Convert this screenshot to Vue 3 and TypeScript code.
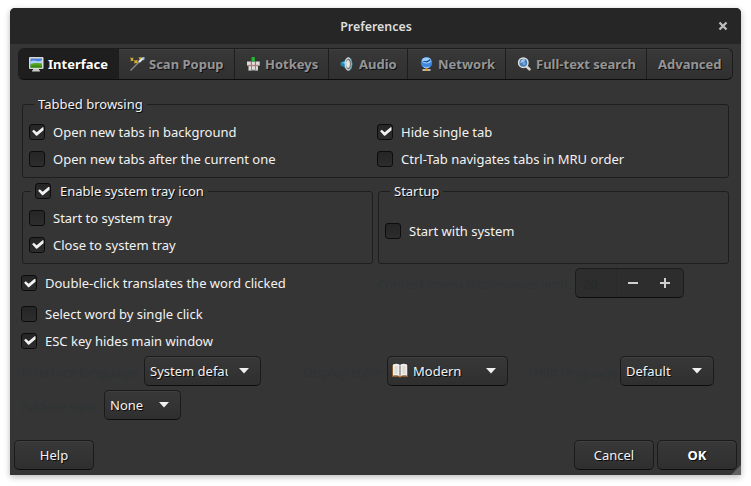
<script setup lang="ts">
import { reactive, ref } from 'vue'

interface Tab {
  id: string
  label: string
  width: number
}

const tabs: Tab[] = [
  { id: 'interface', label: 'Interface', width: 100 },
  { id: 'scan', label: 'Scan Popup', width: 116 },
  { id: 'hotkeys', label: 'Hotkeys', width: 94 },
  { id: 'audio', label: 'Audio', width: 79 },
  { id: 'network', label: 'Network', width: 98 },
  { id: 'search', label: 'Full-text search', width: 141 },
  { id: 'advanced', label: 'Advanced', width: 85 },
]
const activeTab = ref('interface')

const options = reactive({
  newTabsBackground: true,
  newTabsAfterCurrent: false,
  hideSingleTab: true,
  mruTabOrder: false,
  trayIcon: true,
  startToTray: false,
  closeToTray: true,
  startWithSystem: false,
  doubleClick: true,
  singleClick: false,
  escHides: true,
})
</script>

<template>
  <main class="window">
    <header class="titlebar">
      <h1>Preferences</h1>
      <button class="close" aria-label="Close">
        <svg width="10" height="10" viewBox="0 0 10 10"><path d="M1.500 1.500 8.500 8.500M8.500 1.500 1.500 8.500" stroke="#bdbdbd" stroke-width="2.300" /></svg>
      </button>
    </header>

    <nav class="tabs">
      <button
        v-for="tab in tabs"
        :key="tab.id"
        class="tab"
        :class="{ active: tab.id === activeTab }"
        :style="{ width: tab.width + 'px' }"
        @click="activeTab = tab.id"
      >
        <svg v-if="tab.id === 'interface'" class="icon" viewBox="0 0 16 16">
          <rect x="1" y="1" width="14.500" height="12" rx="1" fill="#d9d9d4" />
          <path d="M5 13h6v1.200h1V15.500H4V14.200h1z" fill="#c9c9c4" />
          <rect x="2.500" y="2.500" width="11.500" height="9" fill="#4a80d8" />
          <path d="M2.500 5.500q3-1.500 6-.5t5.500-1v4H2.500z" fill="#a9d0f8" />
          <path d="M2.500 8q5-1.500 11.500-.5v4H2.500z" fill="#55a51c" />
          <path d="M2.500 10q6-1.500 11.500 0v1.500H2.500z" fill="#3c8713" />
        </svg>
        <svg v-else-if="tab.id === 'scan'" class="icon" viewBox="0 0 16 16">
          <path d="M1.500 14.500 11 5" stroke="#8b8d8a" stroke-width="1.300" />
          <path d="M10 6 14 2" stroke="#e4e9ef" stroke-width="2.400" />
          <path d="M13.500 1h2v2.500l-1.500 1z" fill="#8db9ec" />
          <path d="M1 1.500 3 2l1.500-.5-.5 2 .8 1.500-2-.2L1.500 5.500 2 3.500zM5 4l2 .5L8.500 3.500V6L9 7.500 7 7 5 7.500l.6-2zM9.500 1l1.500.6L12.500 1 12 3l-1.500.5z" fill="#d5ae32" />
        </svg>
        <svg v-else-if="tab.id === 'hotkeys'" class="icon" viewBox="0 0 16 16">
          <path d="M2 5.500h4v4H2zM6.500 5.500H10v4H6.500zM10.700 5.500h4v4h-4zM3.500 10h3v4.500h-3zM7 10h3v4H7zM10.500 10H13v4.500h-2.500z" fill="#dededb" />
          <path d="M2 8.700h12.700v.8H2zM3.500 13.700h3v.8h-3zM7 13.500h6v1H7z" fill="#aaa" />
          <path d="M6.200 5.500v4M10.400 5.500v4M3.500 9.800H13" stroke="#c96b6b" stroke-width=".8" />
          <rect x="6.500" y="1" width="3.400" height="4.500" rx="1" fill="#23b832" />
        </svg>
        <svg v-else-if="tab.id === 'audio'" class="icon" viewBox="0 0 16 16">
          <path d="M1.500 6.500 4 5.500 10 1v14l-6-4.500-2.500-1z" fill="#1d85b0" />
          <path d="M2 7l3-.8L9 3v5z" fill="#65d5f4" />
          <ellipse cx="9.300" cy="8" rx="3.700" ry="6.800" fill="#d8dbd8" />
          <ellipse cx="9.500" cy="8" rx="2.700" ry="5.500" fill="#777b7d" />
          <ellipse cx="9" cy="8" rx="1.900" ry="3.700" fill="#e4e6e5" />
          <path d="M11.700 2.500q3 5.500 0 11" fill="none" stroke="#329fca" stroke-width=".8" />
        </svg>
        <svg v-else-if="tab.id === 'network'" class="icon" viewBox="0 0 16 16">
          <circle cx="8.500" cy="6.800" r="5.700" fill="#3d87df" />
          <ellipse cx="8.500" cy="4.500" rx="4.500" ry="3" fill="#9cccf8" />
          <path d="M4 5h5l3-2 .5 1.500-3.500 2-2.500-.5z" fill="#174e9e" />
          <path d="M4.500 9.500q4 3 8 0-1 2.700-4 2.700t-4-2.700z" fill="#8fc2f7" />
          <path d="M8.500 12.300v2" stroke="#f3a51c" stroke-width="1.500" />
          <path d="M4.500 14h8" stroke="#e8e8e2" stroke-width="1.300" />
          <path d="M7 14h3" stroke="#f4a21a" stroke-width="1.800" />
        </svg>
        <svg v-else-if="tab.id === 'search'" class="icon" viewBox="0 0 16 16">
          <path d="M10 10 13.500 13.300" stroke="#d4d4d0" stroke-width="2.600" stroke-linecap="round" />
          <circle cx="7.300" cy="6.700" r="4.700" fill="#477bb6" stroke="#dedfdd" stroke-width="1.500" />
          <path d="M4.300 7.200q.2-4 4.200-4.200L9 5.200 6.500 6.200z" fill="#a7c9ed" />
          <circle cx="8" cy="7.500" r="1.500" fill="#79a9da" />
        </svg>
        <span>{{ tab.label }}</span>
      </button>
    </nav>

    <section class="page">
      <fieldset class="group tabbed">
        <legend>Tabbed browsing</legend>
        <label class="check"><input v-model="options.newTabsBackground" type="checkbox"><span>Open new tabs in background</span></label>
        <label class="check"><input v-model="options.hideSingleTab" type="checkbox"><span>Hide single tab</span></label>
        <label class="check"><input v-model="options.newTabsAfterCurrent" type="checkbox"><span>Open new tabs after the current one</span></label>
        <label class="check"><input v-model="options.mruTabOrder" type="checkbox"><span>Ctrl-Tab navigates tabs in MRU order</span></label>
      </fieldset>

      <div class="pair">
        <fieldset class="group tray">
          <legend><label class="check"><input v-model="options.trayIcon" type="checkbox"><span>Enable system tray icon</span></label></legend>
          <label class="check"><input v-model="options.startToTray" type="checkbox"><span>Start to system tray</span></label>
          <label class="check"><input v-model="options.closeToTray" type="checkbox"><span>Close to system tray</span></label>
        </fieldset>
        <fieldset class="group startup">
          <legend>Startup</legend>
          <label class="check"><input v-model="options.startWithSystem" type="checkbox"><span>Start with system</span></label>
        </fieldset>
      </div>

      <div class="row click-row">
        <label class="check"><input v-model="options.doubleClick" type="checkbox"><span>Double-click translates the word clicked</span></label>
        <span class="dim context">Context menu dictionaries limit:</span>
        <div class="spin">
          <span class="value">20</span>
          <svg width="66" height="28" viewBox="0 0 66 28"><path d="M11 14h10M43 14h10M48 9v10" stroke="#cfcfcf" stroke-width="2" /></svg>
        </div>
      </div>
      <div class="singles">
        <label class="check"><input v-model="options.singleClick" type="checkbox"><span>Select word by single click</span></label>
        <label class="check"><input v-model="options.escHides" type="checkbox"><span>ESC key hides main window</span></label>
      </div>

      <div class="row combos">
        <span class="dim">Interface language:</span>
        <button class="control combo lang"><span class="text">System default</span><svg class="arrow" viewBox="0 0 10 6"><path d="M0 0h10L5 5.500z" /></svg></button>
        <span class="dim">Display style:</span>
        <button class="control combo display">
          <svg class="book" viewBox="0 0 16 16">
            <path d="M0 2h16v12H9L8 15 7 14H0z" fill="#8a5a2c" />
            <path d="M1 1.500q4-1.500 7 .5 3-2 7-.5v11q-4-1-7 1-3-2-7-1z" fill="#efede9" />
            <path d="M7 2.500h2v10L8 13l-1-.5z" fill="#aaa6a2" />
            <path d="M2.500 4h3M2.500 6h3M2.500 8h3M2.500 10h3M10.500 4h3M10.500 6h3M10.500 8h3M10.500 10h3" stroke="#c2beba" stroke-width=".8" />
          </svg>
          <span class="text">Modern</span><svg class="arrow" viewBox="0 0 10 6"><path d="M0 0h10L5 5.500z" /></svg>
        </button>
        <span class="dim">Help language:</span>
        <button class="control combo help-lang"><span class="text">Default</span><svg class="arrow" viewBox="0 0 10 6"><path d="M0 0h10L5 5.500z" /></svg></button>
      </div>
      <div class="row addon">
        <span class="dim">Add-on style:</span>
        <button class="control combo style"><span class="text">None</span><svg class="arrow" viewBox="0 0 10 6"><path d="M0 0h10L5 5.500z" /></svg></button>
      </div>
    </section>

    <footer class="actions">
      <button class="control">Help</button>
      <span class="spacer"></span>
      <button class="control">Cancel</button>
      <button class="control primary">OK</button>
    </footer>
    <span class="grip"></span>
  </main>
</template>

<style>
body {
  margin: 0;
  background: #fff;
  overflow: hidden;
}
</style>

<style scoped>
* {
  box-sizing: border-box;
}
.window {
  position: relative;
  display: flex;
  flex-direction: column;
  width: 731px;
  height: 467px;
  margin: 8px 10px 11px;
  border-radius: 5px 5px 0 0;
  background: #353535;
  box-shadow: 0 2px 6px rgba(0, 0, 0, 0.28);
  color: #f2f2f2;
  font: 13px/18px "Noto Sans", sans-serif;
  white-space: nowrap;
}
button {
  margin: 0;
  padding: 0;
  border: 0;
  background: none;
  color: inherit;
  font: inherit;
}
.titlebar {
  display: grid;
  grid-template-columns: 36px 1fr 36px;
  align-items: center;
  height: 36px;
  border-radius: 5px 5px 0 0;
  background: #262626;
}
h1 {
  grid-column: 2;
  margin: 0;
  padding: 2px 0 0 1px;
  color: #dedede;
  font-size: 12.400px;
  font-weight: 600;
  text-align: center;
}
.close {
  display: grid;
  place-items: center;
  height: 36px;
}
.tabs {
  display: flex;
  width: 715px;
  height: 32px;
  margin: 4px 8px 0;
  border: 1px solid #1c1c1c;
  border-bottom-color: #0d0d0d;
  border-radius: 6px;
  background: linear-gradient(#383838, #303030);
  overflow: hidden;
}
.tab {
  display: flex;
  flex-shrink: 0;
  align-items: center;
  justify-content: flex-start;
  gap: 4px;
  padding-left: 10px;
  border-right: 1px solid #1d1d1d;
  box-shadow: inset 0 1px #404040;
  color: #959595;
  font-weight: 700;
  text-shadow: 1px 1px #101010;
}
.tab:last-child {
  padding-left: 11px;
  border-right: 0;
}
.tab.active {
  padding-left: 9px;
  background: #1e1e1e;
  box-shadow: none;
  color: #fff;
}
.icon {
  flex: none;
  width: 16px;
  height: 16px;
}
.page {
  flex: 1;
  padding: 15px 12px 0;
}
.group {
  position: relative;
  min-width: 0;
  margin: 0;
  padding: 0;
  border: 1px solid #1e1e1e;
  border-radius: 3px;
}
legend {
  height: 18px;
  padding: 0 4px;
  text-shadow: 1px 1px #0c0c0c;
}
.tabbed {
  display: grid;
  grid-template-columns: 348px 1fr;
  grid-auto-rows: 27px;
  align-content: start;
  width: 707px;
  height: 83px;
  padding: 5px 0 0 6px;
}
.tabbed legend {
  margin-left: 5px;
}
.pair {
  display: flex;
  gap: 5px;
  margin-top: 4px;
}
.pair .group {
  width: 351px;
  height: 82px;
}
.tray {
  padding: 4px 0 0 6px;
}
.tray legend {
  margin-left: 2px;
  padding: 0 4px;
}
.tray legend .check {
  height: 18px;
  gap: 9px;
}
.startup {
  padding: 4px 0 0 6px;
}
.startup legend {
  margin-left: 5px;
}
.startup > .check {
  margin-top: 13px;
}
.check {
  display: flex;
  align-items: center;
  gap: 8px;
  height: 27px;
}
.check input {
  appearance: none;
  flex: none;
  display: grid;
  place-items: center;
  width: 16px;
  height: 16px;
  margin: 0;
  border: 1px solid #0c0c0c;
  border-radius: 3px;
  background: linear-gradient(#252525, #2d2d2d);
}
.check input:checked::after {
  content: "";
  width: 12px;
  height: 9px;
  margin-left: 1px;
  background: #f2f2f2;
  clip-path: polygon(5% 48%, 19% 30%, 43% 57%, 93% 4%, 100% 4%, 100% 36%, 46% 96%, 39% 96%);
}
.row {
  display: flex;
  align-items: center;
  height: 30px;
}
.click-row {
  margin: 4px 0 0 -1px;
}
.click-row .check {
  width: 356px;
}
.dim {
  padding-top: 1px;
  color: #2e3436;
}
.context {
  width: 194px;
  overflow: hidden;
}
.spin {
  display: flex;
  width: 109px;
  height: 30px;
  margin-left: 4px;
  border: 1px solid #1c1c1c;
  border-bottom-color: #0d0d0d;
  border-radius: 5px;
  background: #2d2d2d;
}
.value {
  width: 41px;
  padding: 6px 0 0 7px;
  border-right: 1px solid #292929;
  color: #252a2b;
}
.singles {
  padding-top: 2px;
  margin-left: -1px;
}
.combos {
  margin: 2px 0 0 -1px;
}
.combos .dim:nth-child(1) { width: 123px; }
.combos .dim:nth-child(3) { width: 84px; margin-left: 42px; }
.combos .dim:nth-child(5) { width: 91px; margin-left: 21px; }
.addon {
  margin: 4px 0 0 -1px;
}
.addon .dim {
  width: 83px;
}
.control {
  display: flex;
  align-items: center;
  justify-content: center;
  flex: none;
  width: 80px;
  height: 30px;
  border: 1px solid #1b1b1b;
  border-bottom-color: #0d0d0d;
  border-radius: 5px;
  background: linear-gradient(#383838, #2f2f2f);
  box-shadow: inset 0 1px #404040;
  text-shadow: 1px 1px #0b0b0b;
}
.combo {
  justify-content: space-between;
  padding: 0 11px 0 5px;
  text-align: left;
}
.lang { width: 117px; }
.lang .text { width: 78px; overflow: hidden; }
.display { width: 121px; padding-left: 4px; }
.display .text { flex: 1; padding-left: 5px; }
.help-lang { width: 94px; }
.style { width: 77px; }
.arrow {
  width: 10px;
  height: 6px;
  fill: #f0f0f0;
}
.book {
  width: 16px;
  height: 16px;
}
.actions {
  display: flex;
  gap: 3px;
  padding: 0 4px 5px;
}
.spacer {
  flex: 1;
}
.primary {
  color: #fff;
  font-weight: 700;
}
.grip {
  position: absolute;
  right: 0;
  bottom: 0;
  width: 10px;
  height: 10px;
  background: #626262;
  clip-path: polygon(100% 0, 100% 100%, 0 100%);
}
</style>
